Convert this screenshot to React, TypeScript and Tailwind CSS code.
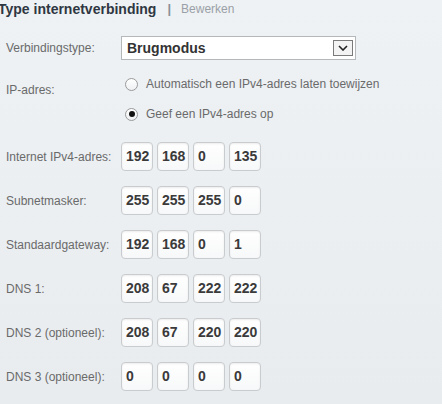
import React from 'react';

const rows: { label: string; values: string[] }[] = [
  { label: 'Internet IPv4-adres:', values: ['192', '168', '0', '135'] },
  { label: 'Subnetmasker:', values: ['255', '255', '255', '0'] },
  { label: 'Standaardgateway:', values: ['192', '168', '0', '1'] },
  { label: 'DNS 1:', values: ['208', '67', '222', '222'] },
  { label: 'DNS 2 (optioneel):', values: ['208', '67', '220', '220'] },
  { label: 'DNS 3 (optioneel):', values: ['0', '0', '0', '0'] },
];

function Radio({ checked, label }: { checked?: boolean; label: string }) {
  return (
    <div className="flex h-[20px] items-center">
      <span className="ml-[4px] flex h-[13px] w-[13px] items-center justify-center rounded-full border border-[#9a9a9a] bg-gradient-to-b from-white to-[#eef0f2]">
        {checked && <span className="h-[6px] w-[6px] rounded-full bg-[#111]" />}
      </span>
      <span className="ml-[8px] text-[12px] text-[#6a6a6a]">{label}</span>
    </div>
  );
}

export default function App() {
  return (
    <div className="h-[404px] w-[442px] overflow-hidden bg-gradient-to-b from-[#eef2f5] to-[#e8ecef] font-['Liberation_Sans',Arial,sans-serif]">
      {/* Header */}
      <div className="-ml-[2px] flex h-[18px] items-center">
        <span className="text-[14px] font-bold text-[#2f3742]">Type internetverbinding</span>
        <span className="ml-[11px] text-[13px] font-bold text-[#8a9098]">|</span>
        <span className="ml-[10px] text-[12px] text-[#9aa0a6]">Bewerken</span>
      </div>

      {/* Verbindingstype */}
      <div className="mt-[18px] flex h-[24px] items-center">
        <div className="w-[121px] pl-[6px] text-[12px] text-[#6a6a6a]">Verbindingstype:</div>
        <div className="flex h-[24px] w-[235px] items-center justify-between border border-[#b5b8bb] bg-white pl-[5px] pr-[2px]">
          <span className="text-[14px] font-bold text-[#333]">Brugmodus</span>
          <span className="flex h-[16px] w-[20px] items-center justify-center border border-[#7a7a7a] bg-[#f3f3f3]">
            <svg width="10" height="6" viewBox="0 0 10 6">
              <path d="M1 1l4 4 4-4" fill="none" stroke="#222" strokeWidth="1.6" />
            </svg>
          </span>
        </div>
      </div>

      {/* IP-adres */}
      <div className="mt-[14px] flex">
        <div className="mt-[6px] h-[20px] w-[121px] pl-[6px] text-[12px] leading-[20px] text-[#6a6a6a]">IP-adres:</div>
        <div className="flex flex-col gap-[10px]">
          <Radio label="Automatisch een IPv4-adres laten toewijzen" />
          <Radio checked label="Geef een IPv4-adres op" />
        </div>
      </div>

      {/* Address rows */}
      <div className="mt-[18px] flex flex-col gap-[15px]">
        {rows.map((row) => (
          <div key={row.label} className="flex h-[29px] items-center">
            <div className="w-[121px] pl-[6px] text-[12px] text-[#6a6a6a]">{row.label}</div>
            <div className="flex gap-[4px]">
              {row.values.map((v, i) => (
                <div
                  key={i}
                  className="flex h-[29px] w-[32px] items-center rounded-[4px] border border-[#c9cccf] bg-gradient-to-b from-white to-[#f7f8f9] pl-[4px] text-[14px] font-bold text-[#3a3a3a] shadow-[inset_0_1px_2px_rgba(0,0,0,0.08)]"
                >
                  {v}
                </div>
              ))}
            </div>
          </div>
        ))}
      </div>
    </div>
  );
}
